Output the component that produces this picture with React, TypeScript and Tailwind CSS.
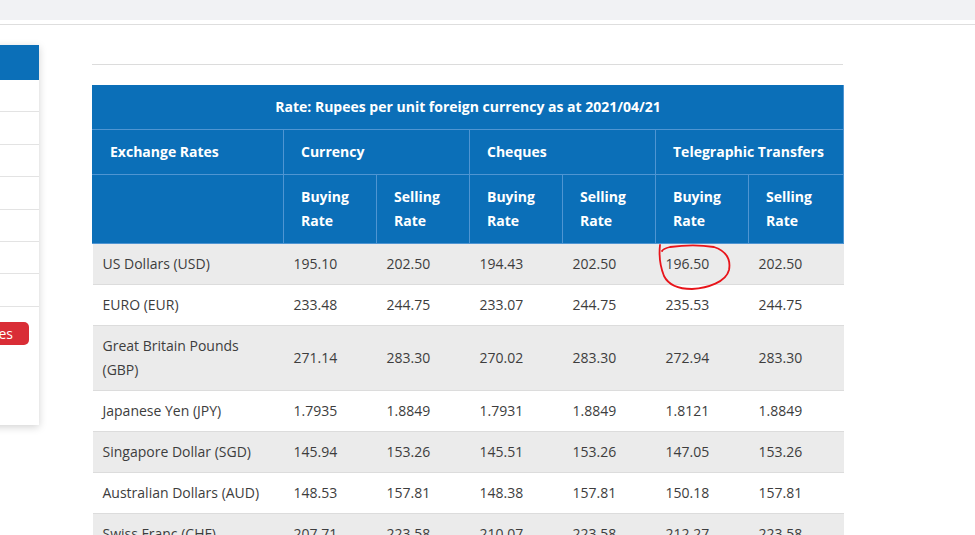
const rows = [
  { name: "US Dollars (USD)", v: ["195.10", "202.50", "194.43", "202.50", "196.50", "202.50"] },
  { name: "EURO (EUR)", v: ["233.48", "244.75", "233.07", "244.75", "235.53", "244.75"] },
  { name: "Great Britain Pounds (GBP)", v: ["271.14", "283.30", "270.02", "283.30", "272.94", "283.30"] },
  { name: "Japanese Yen (JPY)", v: ["1.7935", "1.8849", "1.7931", "1.8849", "1.8121", "1.8849"] },
  { name: "Singapore Dollar (SGD)", v: ["145.94", "153.26", "145.51", "153.26", "147.05", "153.26"] },
  { name: "Australian Dollars (AUD)", v: ["148.53", "157.81", "148.38", "157.81", "150.18", "157.81"] },
  { name: "Swiss Franc (CHF)", v: ["207.71", "223.58", "210.07", "223.58", "212.27", "223.58"] },
];

function Circle() {
  // hand-drawn red mark around the highlighted rate
  return (
    <svg
      className="absolute left-0 top-0 overflow-visible pointer-events-none"
      width="93"
      height="41"
      viewBox="0 0 93 41"
      fill="none"
    >
      <path
        d="M4 1 C3 10 4 22 8 32 C12 40 22 45 36 45 C52 44 70 38 73 26 C75 15 70 7 58 3 C46 1 28 1 14 3 C10 4 7 5 6 7"
        stroke="#e8141a"
        strokeWidth="1.8"
        strokeLinecap="round"
      />
    </svg>
  );
}

function Sidebar() {
  return (
    <div className="ml-[-201px] mt-5 w-[240px] h-[380px] bg-white shadow-[0_2px_8px_rgba(0,0,0,0.18)] shrink-0">
      <div className="h-[35px] bg-[#0b6fb8]" />
      {[0, 1, 2, 3, 4, 5, 6].map((i) => (
        <div key={i} className="h-[32.4px] border-b border-[#e3e3e3]" />
      ))}
      <div className="flex justify-end pr-[10px] mt-[15px]">
        <button className="h-[23px] rounded-[5px] bg-[#d92d36] pl-4 pr-[16px] text-[14px] leading-[23px] text-white">
          View Rates
        </button>
      </div>
    </div>
  );
}

export default function App() {
  const th = "border border-[#4f95d2] px-[17px] py-[10px] text-left align-top font-bold leading-6";
  return (
    <div className="w-[975px] h-[535px] overflow-hidden bg-white font-['Open_Sans',sans-serif] text-[14px]">
      <div className="h-5 bg-[#f1f2f4]" />
      <div className="h-[5px] border-b border-[#dedede]" />
      <div className="flex">
        <Sidebar />
        <div className="ml-[53px] w-[751px]">
          <div className="mt-[39px] border-t border-[#dcdcdc]" />
          <table className="mt-5 w-[751px] table-fixed border-collapse">
            <colgroup>
              <col className="w-[191px]" />
              <col className="w-[93px]" />
              <col className="w-[93px]" />
              <col className="w-[93px]" />
              <col className="w-[93px]" />
              <col className="w-[93px]" />
              <col className="w-[95px]" />
            </colgroup>
            <thead className="bg-[#0b6fb8] text-white">
              <tr>
                <th colSpan={7} className="border border-[#4f95d2] border-l-[#0b6fb8] border-t-[#0b6fb8] pt-[9px] pb-[10px] text-center font-bold leading-6">
                  Rate: Rupees per unit foreign currency as at 2021/04/21
                </th>
              </tr>
              <tr>
                <th className={th + " border-l-[#0b6fb8]"}>Exchange Rates</th>
                <th colSpan={2} className={th}>Currency</th>
                <th colSpan={2} className={th}>Cheques</th>
                <th colSpan={2} className={th}>Telegraphic Transfers</th>
              </tr>
              <tr>
                <th className={th + " border-l-[#0b6fb8]"} />
                <th className={th}>Buying<br />Rate</th>
                <th className={th}>Selling<br />Rate</th>
                <th className={th}>Buying<br />Rate</th>
                <th className={th}>Selling<br />Rate</th>
                <th className={th}>Buying<br />Rate</th>
                <th className={th}>Selling<br />Rate</th>
              </tr>
            </thead>
            <tbody className="text-[#3d3d3d]">
              {rows.map((r, i) => (
                <tr key={r.name} className={(i % 2 === 0 ? "bg-[#ebebeb]" : "bg-white") + " border-b border-[#dcdcdc]"}>
                  <td className="px-[10px] py-2 leading-6 align-middle">{r.name}</td>
                  {r.v.map((x, j) => (
                    <td key={j} className="relative px-[10px] py-2 leading-6 align-middle">
                      {x}
                      {i === 0 && j === 4 && <Circle />}
                    </td>
                  ))}
                </tr>
              ))}
            </tbody>
          </table>
        </div>
      </div>
    </div>
  );
}
